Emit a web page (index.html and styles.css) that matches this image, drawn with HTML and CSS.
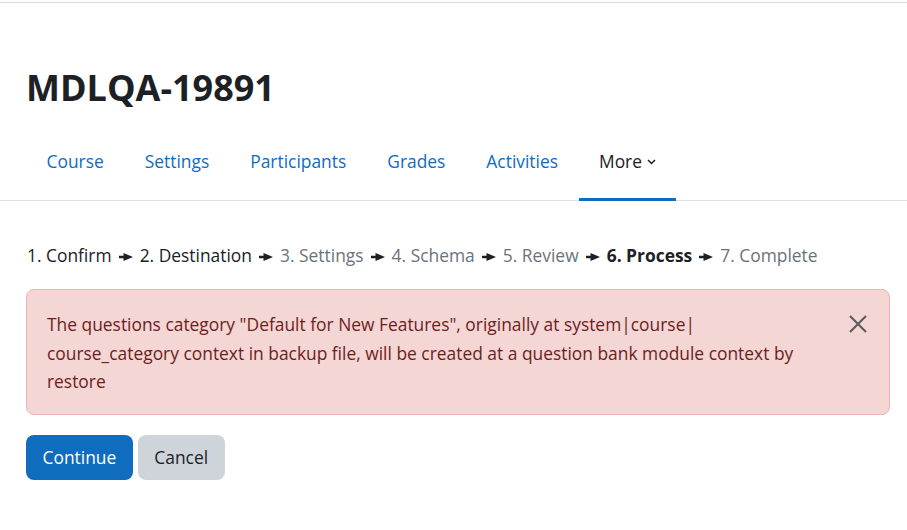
FILE: index.html
```html
<!DOCTYPE html>
<html>
<head>
<meta charset="utf-8">
<link rel="stylesheet" href="styles.css">
</head>
<body>
<div class="topbar"></div>
<header class="page-header">
  <h1 class="title">MDLQA-19891</h1>
</header>
<nav class="secnav">
  <a class="navlink">Course</a>
  <a class="navlink">Settings</a>
  <a class="navlink">Participants</a>
  <a class="navlink">Grades</a>
  <a class="navlink">Activities</a>
  <a class="navlink active">More <svg class="caret" width="9" height="6" viewBox="0 0 9 6"><path d="M1 1 L4.5 4.5 L8 1" fill="none" stroke="#1d2125" stroke-width="1.5"/></svg></a>
</nav>
<main class="content">
  <div class="steps">
    <span class="done">1. Confirm</span> <svg class="arrow" width="14" height="8" viewBox="0 0 14 8"><path d="M0 2.8 H6 V5.2 H0 Z M4.5 0 L14 4 L4.5 8 Z" fill="#1d2125"/></svg>
    <span class="done">2. Destination</span> <svg class="arrow" width="14" height="8" viewBox="0 0 14 8"><path d="M0 2.8 H6 V5.2 H0 Z M4.5 0 L14 4 L4.5 8 Z" fill="#1d2125"/></svg>
    <span class="todo">3. Settings</span> <svg class="arrow" width="14" height="8" viewBox="0 0 14 8"><path d="M0 2.8 H6 V5.2 H0 Z M4.5 0 L14 4 L4.5 8 Z" fill="#1d2125"/></svg>
    <span class="todo">4. Schema</span> <svg class="arrow" width="14" height="8" viewBox="0 0 14 8"><path d="M0 2.8 H6 V5.2 H0 Z M4.5 0 L14 4 L4.5 8 Z" fill="#1d2125"/></svg>
    <span class="todo">5. Review</span> <svg class="arrow" width="14" height="8" viewBox="0 0 14 8"><path d="M0 2.8 H6 V5.2 H0 Z M4.5 0 L14 4 L4.5 8 Z" fill="#1d2125"/></svg>
    <span class="current">6. Process</span> <svg class="arrow" width="14" height="8" viewBox="0 0 14 8"><path d="M0 2.8 H6 V5.2 H0 Z M4.5 0 L14 4 L4.5 8 Z" fill="#1d2125"/></svg>
    <span class="todo">7. Complete</span>
  </div>
  <div class="alert">
    <p class="alert-text">The questions category "Default for New Features", originally at system|course| course_category context in backup file, will be created at a question bank module context by restore</p>
    <button class="close" aria-label="Close"><svg width="18" height="18" viewBox="0 0 18 18"><path d="M1 1 L17 17 M17 1 L1 17" stroke="#5a5a5a" stroke-width="2" fill="none"/></svg></button>
  </div>
  <div class="buttons">
    <button class="btn btn-primary">Continue</button>
    <button class="btn btn-secondary">Cancel</button>
  </div>
</main>
</body>
</html>
```
FILE: styles.css
```css
* { box-sizing: border-box; }
html, body { margin: 0; padding: 0; background: #fff; }
body {
  font-family: "Open Sans", "Noto Sans", sans-serif;
  font-size: 17.4px;
  color: #1d2125;
  line-height: 1.5;
}
.topbar {
  height: 3px;
  border-top: 2px solid #fff;
  border-bottom: 1px solid #dcdae6;
}
.page-header { padding: 64px 26px 0; }
.title {
  margin: 0;
  font-size: 36px;
  font-weight: 700;
  line-height: 42px;
  color: #1d2125;
}
.secnav {
  display: flex;
  margin-top: 17px;
  padding: 0 26px;
  border-bottom: 1px solid #dee2e6;
}
.navlink {
  display: flex;
  align-items: center;
  gap: 5px;
  padding: 0 20.5px 2px;
  height: 75px;
  color: #0f6cbf;
  text-decoration: none;
  border-bottom: 3px solid transparent;
  margin-bottom: -1px;
}
.navlink.active {
  color: #1d2125;
  border-bottom-color: #0f6cbf;
}
.caret { margin-top: 1px; }
.content { padding: 0 17px 0 26px; }
.steps {
  margin-top: 41px;
  margin-left: 1px;
  color: #1d2125;
  white-space: nowrap;
}
.steps .todo { color: #6a737b; }
.steps .current { font-weight: 700; }
.steps .arrow { vertical-align: 1px; margin: 0 2.5px; }
.alert {
  display: flex;
  align-items: flex-start;
  margin-top: 21px;
  padding: 20px 20px 18px 20px;
  background: #f4d6d4;
  border: 1px solid #eeb3ae;
  border-radius: 8px;
  color: #6e1d1d;
}
.alert-text { margin: 0; flex: 1; line-height: 28.5px; padding-right: 30px; }
.close {
  background: none;
  border: 0;
  padding: 0;
  margin: 5px 2px 0 0;
  width: 18px;
  height: 18px;
}
.close svg { display: block; }
.buttons { display: flex; gap: 5px; margin-top: 20px; }
.btn {
  font: inherit;
  border: 0;
  border-radius: 8px;
  height: 45px;
  padding: 0 16.5px;
}
.btn-primary { background: #0f6cbf; color: #fff; }
.btn-secondary { background: #ced4da; color: #1d2125; }
```
